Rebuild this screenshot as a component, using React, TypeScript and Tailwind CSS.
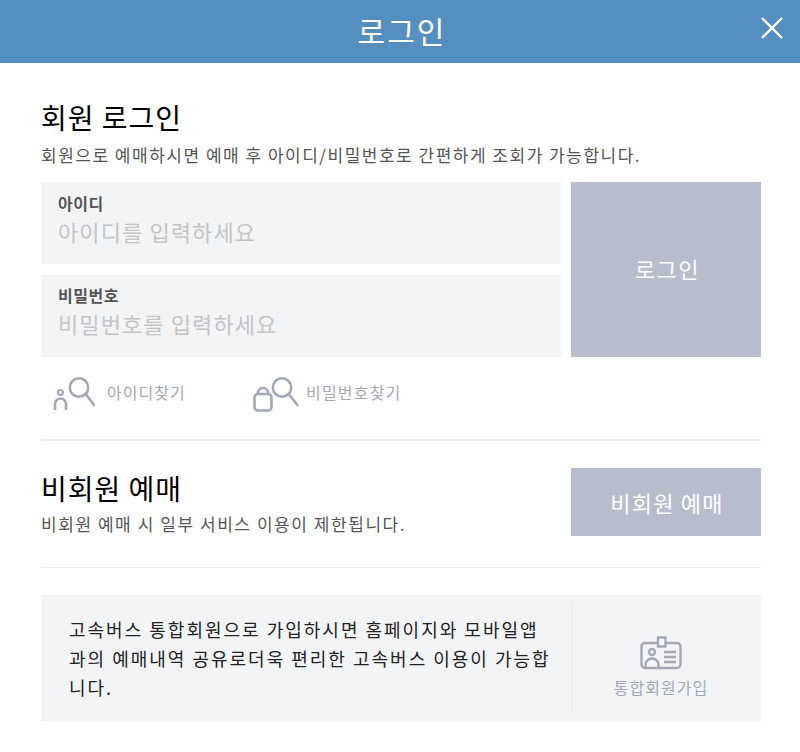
const SearchUserIcon = () => (
  <svg className="shrink-0" width="42" height="34" viewBox="0 0 42 34" fill="none" stroke="#a3a8b4" strokeWidth="2.6">
    <circle cx="7.500" cy="15.500" r="2.500" strokeWidth="2" />
    <path d="M2 33v-6a5.500 5.500 0 0 1 11 0v6" />
    <circle cx="26" cy="10.500" r="9.200" />
    <path d="M33 17.500l8 10.500" strokeLinecap="round" />
  </svg>
);

const SearchLockIcon = () => (
  <svg className="shrink-0" width="46" height="35" viewBox="0 0 46 35" fill="none" stroke="#a3a8b4" strokeWidth="2.6">
    <rect x="1.500" y="17" width="17" height="16.500" rx="3.500" />
    <path d="M5 17v-1a5 5 0 0 1 10 0v1" />
    <circle cx="29" cy="10.500" r="9.200" />
    <path d="M36 17.500l8.500 10.500" strokeLinecap="round" />
  </svg>
);

const CardIcon = () => (
  <svg className="shrink-0" width="42" height="34" viewBox="0 0 42 34" fill="none" stroke="#a3a8b4" strokeWidth="2.400">
    <path d="M17 7H5a3.500 3.500 0 0 0-3.500 3.500v18A3.500 3.500 0 0 0 5 32h32a3.500 3.500 0 0 0 3.500-3.500v-18A3.500 3.500 0 0 0 37 7H26" />
    <rect x="18" y="1.500" width="7.500" height="9" />
    <circle cx="12" cy="16" r="3" />
    <path d="M5.500 32v-3a6.500 6.500 0 0 1 13 0v3" />
    <path d="M24 16h12M24 21h12M24 26h12" />
  </svg>
);

export default function App() {
  return (
    <div className="w-[800px] h-[752px] bg-white overflow-hidden font-['Noto_Sans_CJK_KR','Liberation_Sans',sans-serif]">
      <header className="relative h-[63px] bg-[#548fbf] flex items-center justify-center">
        <h1 className="text-[30px] tracking-[2px] text-white font-normal leading-none pb-[3px] pl-[4px]">로그인</h1>
        <svg className="absolute right-[16px] top-[16px]" width="24" height="24" viewBox="0 0 24 24" stroke="#fff" strokeWidth="2.4">
          <path d="M2 2l20 20M22 2L2 22" />
        </svg>
      </header>

      <main className="pl-[41px] pr-[39px]">
        <section className="pt-[35px]">
          <h2 className="text-[28px] tracking-[1px] leading-[38px] text-black font-normal">회원 로그인</h2>
          <p className="mt-[7px] text-[17px] tracking-[1.5px] leading-[24px] text-[#555] whitespace-nowrap">회원으로 예매하시면 예매 후 아이디/비밀번호로 간편하게 조회가 가능합니다.</p>
          <div className="mt-[15px] flex gap-[10px]">
            <div className="w-[520px] shrink-0 flex flex-col gap-[11px]">
              <div className="h-[82px] bg-[#f3f4f6] px-[17px] pt-[10px]">
                <div className="text-[16px] tracking-[0.5px] leading-[22px] font-bold text-[#555]">아이디</div>
                <div className="text-[22px] tracking-[1.1px] leading-[32px] text-[#c4c4c4] mt-[1px]">아이디를 입력하세요</div>
              </div>
              <div className="h-[82px] bg-[#f3f4f6] px-[17px] pt-[9px]">
                <div className="text-[16px] tracking-[0.5px] leading-[22px] font-bold text-[#555]">비밀번호</div>
                <div className="text-[22px] tracking-[1.1px] leading-[32px] text-[#c4c4c4] mt-[1px]">비밀번호를 입력하세요</div>
              </div>
            </div>
            <button className="w-[190px] shrink-0 h-[175px] pb-[2px] pl-[3px] bg-[#b8bdcc] text-white text-[22px] tracking-[1.500px]">로그인</button>
          </div>
          <div className="flex h-[84px] border-b-2 border-[#eceef0] pl-[12px] pt-[20px] items-start">
            <div className="flex items-start w-[200px] gap-[12px]">
              <SearchUserIcon />
              <span className="text-[16px] tracking-[1px] leading-[24px] mt-[3px] text-[#a3a8b4]">아이디찾기</span>
            </div>
            <div className="flex items-start gap-[7px]">
              <SearchLockIcon />
              <span className="text-[16px] tracking-[1.2px] leading-[24px] mt-[3px] text-[#a3a8b4]">비밀번호찾기</span>
            </div>
          </div>
        </section>

        <section className="flex justify-between items-start h-[127px] pt-[27px] border-b border-[#eceef0]">
          <div className="pt-[1px]">
            <h2 className="text-[28px] tracking-[1px] leading-[38px] text-black font-normal">비회원 예매</h2>
            <p className="mt-[5px] text-[17px] tracking-[1.55px] leading-[24px] text-[#555]">비회원 예매 시 일부 서비스 이용이 제한됩니다.</p>
          </div>
          <button className="w-[190px] h-[68px] pl-[2px] bg-[#b8bdcc] text-white text-[22px] tracking-[1.200px]">비회원 예매</button>
        </section>

        <section className="mt-[27px] h-[126px] bg-[#f3f4f6] flex items-center">
          <p className="w-[531px] shrink-0 pl-[28px] pr-[18px] text-[18px] tracking-[2px] leading-[29px] text-[#222] break-all">고속버스 통합회원으로 가입하시면 홈페이지와 모바일앱과의 예매내역 공유로더욱 편리한 고속버스 이용이 가능합니다.</p>
          <div className="h-[114px] flex-1 border-l border-[#e6e7ea] flex flex-col items-center pr-[12px] pt-[35px]">
            <CardIcon />
            <span className="mt-[5px] text-[16px] tracking-[1px] leading-[24px] text-[#a3a8b4]">통합회원가입</span>
          </div>
        </section>
      </main>
    </div>
  );
}
